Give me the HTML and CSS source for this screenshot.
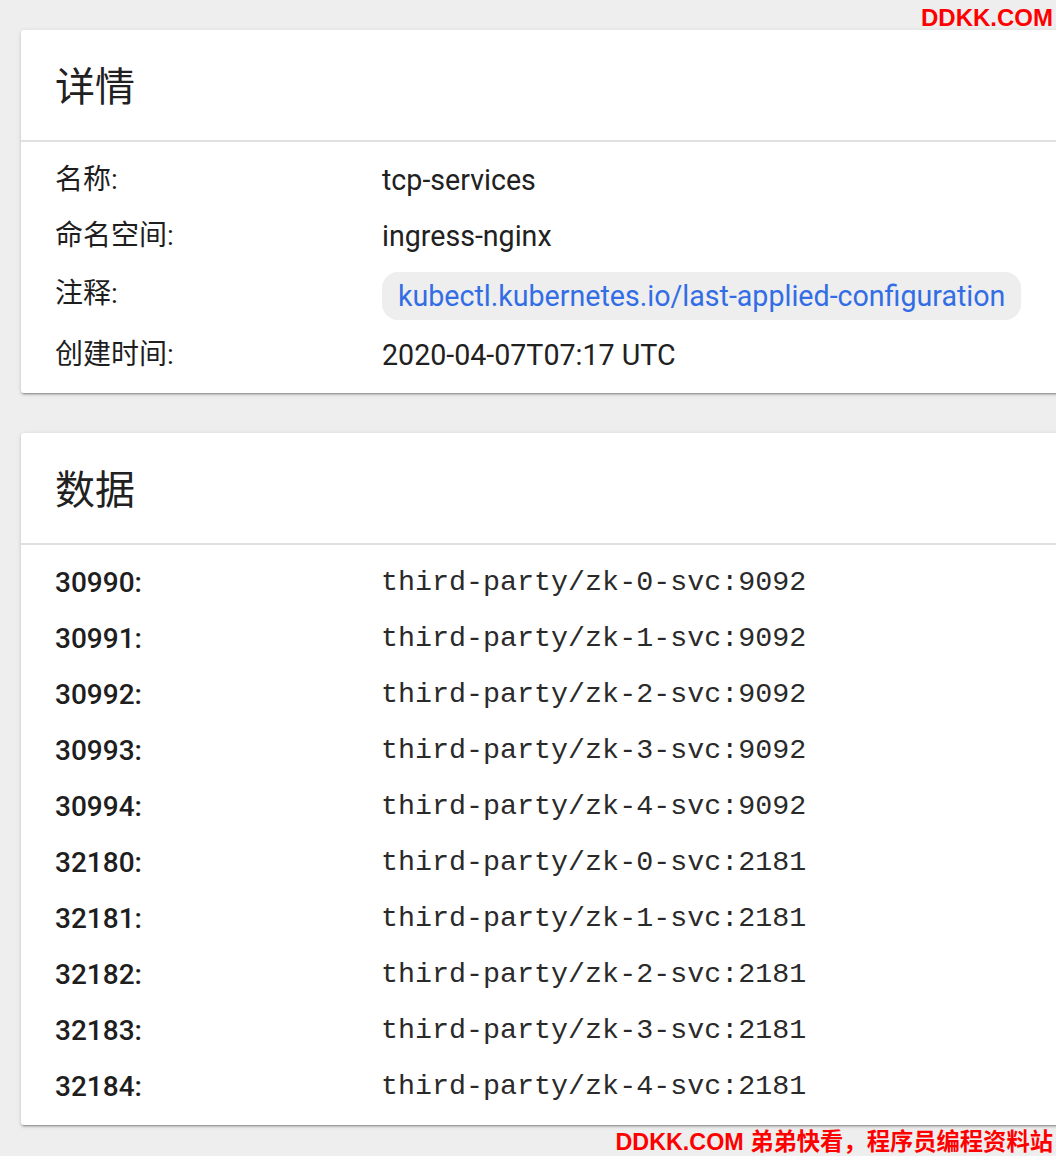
FILE: index.html
```html
<!DOCTYPE html>
<html lang="zh">
<head>
<meta charset="utf-8">
<link rel="stylesheet" href="styles.css">
</head>
<body>
<div class="page">
  <section class="card">
    <header class="card-header"><h2 class="card-title">详情</h2></header>
    <div class="card-body">
      <div class="row"><div class="label">名称:</div><div class="value">tcp-services</div></div>
      <div class="row"><div class="label">命名空间:</div><div class="value">ingress-nginx</div></div>
      <div class="row row-chip"><div class="label">注释:</div><div class="value"><span class="chip">kubectl.kubernetes.io/last-applied-configuration</span></div></div>
      <div class="row"><div class="label">创建时间:</div><div class="value">2020-04-07T07:17 UTC</div></div>
    </div>
  </section>
  <section class="card">
    <header class="card-header"><h2 class="card-title">数据</h2></header>
    <div class="card-body">
      <div class="row"><div class="label num">30990:</div><div class="value mono">third-party/zk-0-svc:9092</div></div>
      <div class="row"><div class="label num">30991:</div><div class="value mono">third-party/zk-1-svc:9092</div></div>
      <div class="row"><div class="label num">30992:</div><div class="value mono">third-party/zk-2-svc:9092</div></div>
      <div class="row"><div class="label num">30993:</div><div class="value mono">third-party/zk-3-svc:9092</div></div>
      <div class="row"><div class="label num">30994:</div><div class="value mono">third-party/zk-4-svc:9092</div></div>
      <div class="row"><div class="label num">32180:</div><div class="value mono">third-party/zk-0-svc:2181</div></div>
      <div class="row"><div class="label num">32181:</div><div class="value mono">third-party/zk-1-svc:2181</div></div>
      <div class="row"><div class="label num">32182:</div><div class="value mono">third-party/zk-2-svc:2181</div></div>
      <div class="row"><div class="label num">32183:</div><div class="value mono">third-party/zk-3-svc:2181</div></div>
      <div class="row"><div class="label num">32184:</div><div class="value mono">third-party/zk-4-svc:2181</div></div>
    </div>
  </section>
</div>
<div class="wm wm-top">DDKK.COM</div>
<div class="wm wm-bottom">DDKK.COM 弟弟快看，程序员编程资料站</div>
</body>
</html>
```

FILE: styles.css
```css
html, body {
  margin: 0;
  padding: 0;
  background: #eeeeee;
  overflow: hidden;
  width: 1056px;
  height: 1156px;
}
body {
  font-family: Roboto, "Noto Sans CJK SC", sans-serif;
  color: rgba(0, 0, 0, 0.87);
  position: relative;
}
.page {
  padding: 30px 0 0 21px;
  display: flex;
  flex-direction: column;
  gap: 40px;
  width: 1120px;
}
.card {
  background: #fff;
  border-radius: 3px;
  box-shadow: 0 2px 2px rgba(0,0,0,0.14), 0 3px 1px -2px rgba(0,0,0,0.2), 0 1px 5px rgba(0,0,0,0.12);
}
.card-header {
  height: 112px;
  border-bottom: 2px solid #e0e0e0;
  display: flex;
  align-items: center;
  padding-left: 34px;
  padding-top: 6px;
  box-sizing: border-box;
}
.card-title {
  margin: 0;
  font-size: 40px;
  font-weight: 400;
  line-height: 1;
  color: #212121;
}
.card-body {
  padding: 10px 0;
}
.row {
  display: flex;
  align-items: center;
  height: 56px;
  padding-left: 34px;
  font-size: 28.6px;
  line-height: 32px;
}
.row-chip {
  height: 63px;
}
.label {
  width: 327px;
  flex: none;
  font-weight: 400;
  font-size: 28px;
  color: #1e1e1e;
}
.label.num {
  font-weight: 500;
}
.row-chip .label {
  margin-top: -4px;
}
.value {
  color: #212121;
}
.mono {
  font-family: "Liberation Mono", monospace;
  font-size: 28.35px;
  margin-left: -1px;
  color: #2a2a2a;
}
.chip {
  display: inline-block;
  background: #eeeeee;
  color: #326de6;
  border-radius: 16px;
  padding: 8px 16px;
  line-height: 32px;
}
.wm {
  position: absolute;
  color: #ff0000;
  font-family: "Liberation Sans", "Noto Sans CJK SC", sans-serif;
  font-weight: 700;
  white-space: nowrap;
  line-height: 1;
}
.wm-top {
  top: 6px;
  right: 3px;
  font-size: 24px;
}
.wm-bottom {
  top: 1131px;
  right: 3px;
  font-size: 23.3px;
}
```
